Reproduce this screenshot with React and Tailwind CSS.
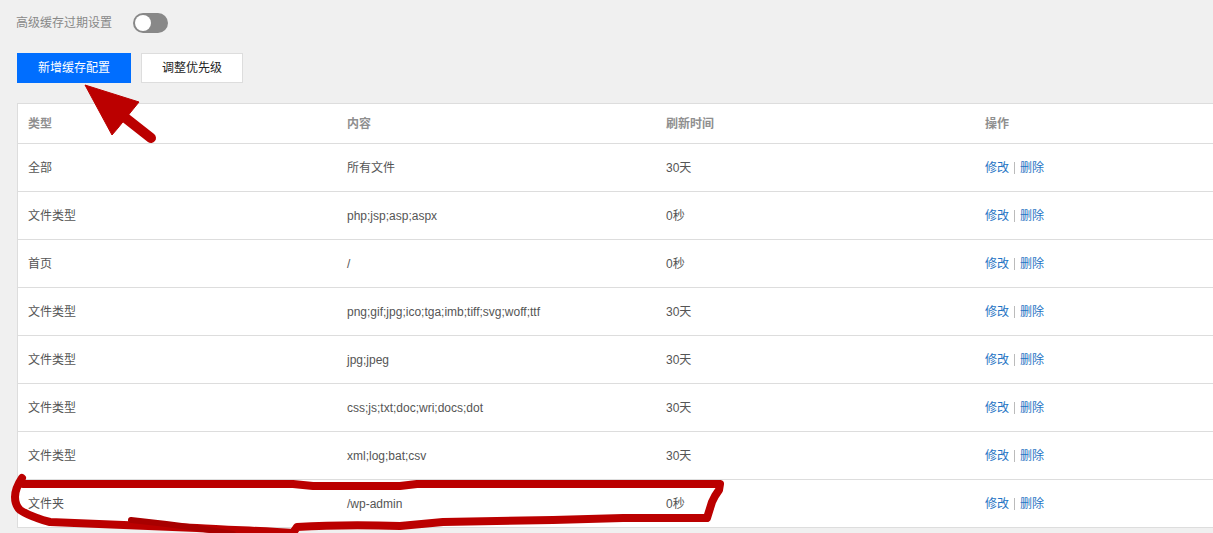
const rows = [
  ["全部", "所有文件", "30天"],
  ["文件类型", "php;jsp;asp;aspx", "0秒"],
  ["首页", "/", "0秒"],
  ["文件类型", "png;gif;jpg;ico;tga;imb;tiff;svg;woff;ttf", "30天"],
  ["文件类型", "jpg;jpeg", "30天"],
  ["文件类型", "css;js;txt;doc;wri;docs;dot", "30天"],
  ["文件类型", "xml;log;bat;csv", "30天"],
  ["文件夹", "/wp-admin", "0秒"],
];

function Annotations() {
  return (
    <svg className="absolute left-0 top-0 pointer-events-none" width="1213" height="533" viewBox="0 0 1213 533">
      <g fill="none" stroke="#bb0000" strokeWidth="8" strokeLinecap="round" strokeLinejoin="round">
        <path d="M22 478 C18 484 15 490 15 497 C15 503 17 507 20 510 C26 514 31 516 37 518 C42 520 46 521 50 522 C100 524 150 526 197 528 C230 530 265 531 293 533 L297 527 C330 525 370 525 400 526 L443 522 L553 520 L623 518 L707 518 L712 502 L715 496 L719 490 L720 484 L417 484 L400 486 L313 486 L293 484 L23 484" />
        <path d="M131 520 C150 522 175 525 197 528 C210 530 222 532 233 534" strokeWidth="6" stroke="#a80000" />
      </g>
      <polygon points="85,85 139,102 126,118 118,128 112,135" fill="#bb0000" stroke="#bb0000" strokeWidth="1" strokeLinejoin="round" />
      <path d="M123 116 L151 138" stroke="#bb0000" strokeWidth="10" strokeLinecap="round" />
    </svg>
  );
}

export default function App() {
  return (
    <div className="relative h-[533px] w-[1213px] overflow-hidden bg-[#f0f0f0] font-['Liberation_Sans','Noto_Sans_CJK_SC',sans-serif] text-xs text-[#555]">
      <div className="flex h-[46px] items-center gap-[21px] pl-4 text-[#888]">
        <span>高级缓存过期设置</span>
        <span className="mb-[1px] flex h-5 w-[35px] items-center rounded-full bg-[#888] pl-[2px]">
          <span className="h-4 w-4 rounded-full bg-white" />
        </span>
      </div>
      <div className="mt-[7px] flex gap-2.5 pl-[17px]">
        <button className="h-[30px] w-[114px] bg-[#006eff] text-white">新增缓存配置</button>
        <button className="h-[30px] w-[102px] border border-[#dddddd] bg-white text-[#222]">调整优先级</button>
      </div>
      <div className="ml-[17px] mt-5 w-[1240px] border border-[#dddddd] bg-white">
        <div className="grid h-[39px] grid-cols-[319px_319px_319px_1fr] items-center pl-[10px] font-bold text-[#8f8f8f]">
          <span>类型</span>
          <span>内容</span>
          <span>刷新时间</span>
          <span>操作</span>
        </div>
        {rows.map((r, i) => (
          <div key={i} className="grid h-12 grid-cols-[319px_319px_319px_1fr] items-center border-t border-[#dddddd] pl-[10px]">
            <span>{r[0]}</span>
            <span>{r[1]}</span>
            <span>{r[2]}</span>
            <span className="flex items-center">
              <a className="text-[#1f74c4]">修改</a>
              <span className="mx-[5px] h-3 w-px bg-[#bbbbbb]" />
              <a className="text-[#1f74c4]">删除</a>
            </span>
          </div>
        ))}
      </div>
      <Annotations />
    </div>
  );
}
